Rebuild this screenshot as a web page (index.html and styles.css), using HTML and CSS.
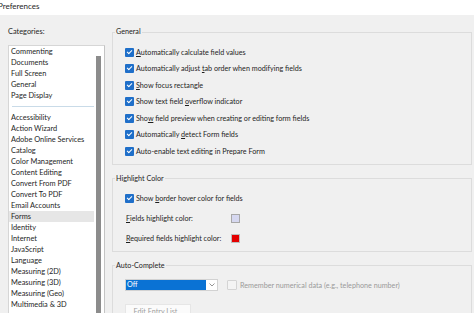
FILE: index.html
```html
<!DOCTYPE html>
<html lang="en">
<head>
  <meta charset="UTF-8">
  <meta name="viewport" content="width=device-width, initial-scale=1.0">
  <title>Preferences</title>
  <link rel="stylesheet" href="styles.css">
</head>
<body>
  <div class="titlebar">Preferences</div>

  <div class="main">
    <!-- Lista de categorias -->
    <div class="sidebar">
      <div class="cat-label">Categories:</div>
      <div class="listbox">
        <ul class="cats">
          <li>Commenting</li>
          <li>Documents</li>
          <li>Full Screen</li>
          <li>General</li>
          <li>Page Display</li>
          <li class="sep"></li>
          <li>Accessibility</li>
          <li>Action Wizard</li>
          <li>Adobe Online Services</li>
          <li>Catalog</li>
          <li>Color Management</li>
          <li>Content Editing</li>
          <li>Convert From PDF</li>
          <li>Convert To PDF</li>
          <li>Email Accounts</li>
          <li class="selected">Forms</li>
          <li>Identity</li>
          <li>Internet</li>
          <li>JavaScript</li>
          <li>Language</li>
          <li>Measuring (2D)</li>
          <li>Measuring (3D)</li>
          <li>Measuring (Geo)</li>
          <li>Multimedia &amp; 3D</li>
        </ul>
        <div class="scrollbar"><div class="thumb"></div></div>
      </div>
    </div>

    <!-- Painel de opcoes -->
    <div class="panel">
      <fieldset class="group general">
        <legend>General</legend>
        <div class="row"><span class="check"></span><span><u>A</u>utomatically calculate field values</span></div>
        <div class="row"><span class="check"></span><span>Automatically adjust <u>t</u>ab order when modifying fields</span></div>
        <div class="row"><span class="check"></span><span><u>S</u>how focus rectangle</span></div>
        <div class="row"><span class="check"></span><span>Show text field <u>o</u>verflow indicator</span></div>
        <div class="row"><span class="check"></span><span>Sho<u>w</u> field preview when creating or editing form fields</span></div>
        <div class="row"><span class="check"></span><span>Automatically <u>d</u>etect Form fields</span></div>
        <div class="row"><span class="check"></span><span>Auto-enable text editing in Prepare Form</span></div>
      </fieldset>

      <fieldset class="group highlight">
        <legend>Highlight Color</legend>
        <div class="row"><span class="check"></span><span>Show <u>b</u>order hover color for fields</span></div>
        <div class="row color-row"><span class="color-label"><u>F</u>ields highlight color:</span><span class="swatch swatch-fields"></span></div>
        <div class="row color-row"><span class="color-label"><u>R</u>equired fields highlight color:</span><span class="swatch swatch-required"></span></div>
      </fieldset>

      <fieldset class="group autocomplete">
        <legend>Auto-Complete</legend>
        <div class="ac-row">
          <div class="dropdown">
            <span class="dd-value">Off</span>
            <span class="dd-arrow">
              <svg width="6" height="4" viewBox="0 0 6 4"><path d="M0.5 0.5 L3 3 L5.5 0.5" fill="none" stroke="#8a8a8a" stroke-width="0.9"/></svg>
            </span>
          </div>
          <span class="check disabled"></span>
          <span class="muted">Remember numerical data (e.g., telephone number)</span>
        </div>
        <div class="edit-btn">Edit Entry List...</div>
      </fieldset>
    </div>
  </div>
</body>
</html>
```

FILE: styles.css
```css
body {
  margin: 0;
  height: 313px;
  overflow: hidden;
  background: #f0f0f0;
  font-family: "Lato", sans-serif;
  font-size: 7.2px;
  color: #1e1e1e;
}

.titlebar {
  height: 15px;
  line-height: 12px;
  background: #ffffff;
  margin-left: -2px;
  font-size: 8px;
}

.main {
  display: flex;
  padding: 10px 0 0 8px;
}

/* Lista de categorias */
.sidebar {
  width: 97px;
  flex-shrink: 0;
}

.cat-label {
  line-height: 14px;
  height: 20px;
  font-size: 7.4px;
}

.listbox {
  position: relative;
  background: #ffffff;
  border: 1px solid #d6d6d6;
  border-right: 1px solid #c4c4c4;
  height: 300px;
}

.cats {
  list-style: none;
  margin: 0;
  padding: 0;
  width: 85px;
  font-size: 7.4px;
}

.cats li {
  height: 11px;
  line-height: 11px;
  padding-left: 2px;
  white-space: nowrap;
}

.cats li.sep {
  box-sizing: border-box;
  padding-top: 5px;
}

.cats li.sep::after {
  content: "";
  display: block;
  height: 1px;
  margin-left: 1px;
  background: #c9dbe8;
}

.cats li.selected {
  background: #e6e6e6;
}

.scrollbar {
  position: absolute;
  top: 0;
  right: 3px;
  width: 5px;
  bottom: 0;
}

.thumb {
  margin-top: 10px;
  height: 300px;
  background: #8c8c8c;
}

/* Painel de opcoes */
.panel {
  margin-left: 7px;
  width: 360px;
  flex-shrink: 0;
}

.group {
  border: 1px solid #dcdcdc;
  margin: 0;
  padding: 0 0 0 2px;
}

.group legend {
  padding: 0 1px;
  line-height: 14px;
}

.general {
  padding-top: 5px;
  padding-bottom: 4px;
}

.highlight {
  margin-top: 7px;
  padding-top: 3px;
  padding-bottom: 2px;
}

.autocomplete {
  margin-top: 7px;
  padding-top: 6px;
  height: 60px;
}

.row {
  display: flex;
  align-items: center;
  height: 16.5px;
  margin-left: 10px;
  white-space: nowrap;
}

.highlight .row {
  height: 20px;
}

u {
  text-decoration: underline;
  text-underline-offset: 1px;
}

.check {
  width: 9px;
  height: 9px;
  border-radius: 1px;
  background: #1f6fc9;
  margin-right: 2px;
  flex-shrink: 0;
  position: relative;
}

.check::after {
  content: "";
  position: absolute;
  left: 3px;
  top: 1px;
  width: 2px;
  height: 4px;
  border: solid #ffffff;
  border-width: 0 1.2px 1.2px 0;
  transform: rotate(45deg);
}

.check.disabled {
  background: #f4f4f4;
  border: 1px solid #d4d4d4;
  width: 8px;
  height: 8px;
}

.check.disabled::after {
  display: none;
}

.color-row {
  margin-left: 11px;
}

.color-label {
  width: 105px;
}

.swatch {
  width: 7px;
  height: 7px;
  border: 1px solid #a8a8a8;
}

.swatch-fields {
  background: #d6d8f0;
}

.swatch-required {
  background: #e30000;
  border-color: #bdbdbd;
}

.ac-row {
  display: flex;
  align-items: center;
  margin-left: 10px;
  height: 13px;
}

.dropdown {
  display: flex;
  width: 93px;
  height: 12px;
  background: #ffffff;
  border: 1px solid #d2d2d2;
  box-sizing: border-box;
  margin-right: 9px;
}

.dd-value {
  flex: 1;
  background: #0a72d4;
  color: #ffffff;
  line-height: 10px;
  padding-left: 1px;
}

.dd-arrow {
  width: 11px;
  display: flex;
  align-items: center;
  justify-content: center;
}

.muted {
  color: #9a9a9a;
  margin-left: 1px;
}

.edit-btn {
  margin: 12px 0 0 10px;
  width: 64px;
  height: 12px;
  line-height: 14px;
  background: #fbfbfb;
  border: 1px solid #e6e6e6;
  color: #a0a0a0;
  text-align: center;
}
```
